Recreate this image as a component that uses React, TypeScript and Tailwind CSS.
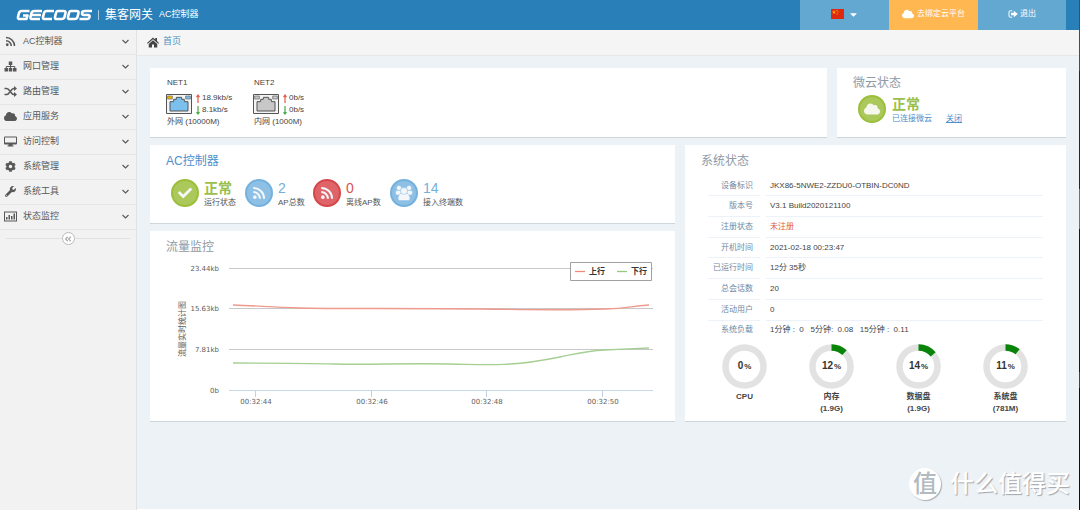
import { useState } from "react";
import { FaCloud, FaCog, FaWrench, FaCheck, FaCaretDown, FaAngleDoubleLeft } from "react-icons/fa";

const RssIcon = ({ className }: any) => (
  <svg viewBox="0 0 22 22" className={className} fill="none" stroke="currentColor" strokeWidth="3.2">
    <circle cx="4.500" cy="17.500" r="2.800" fill="currentColor" stroke="none" />
    <path d="M2 9.500A10.500 10.500 0 0 1 12.500 20M2 3A17 17 0 0 1 19 20" />
  </svg>
);

const SitemapIcon = ({ className }: any) => (
  <svg viewBox="0 0 26 22" className={className} fill="currentColor">
    <path d="M9.500 1h7v7h-7zM1 14h7v7H1zM9.500 14h7v7h-7zM18 14h7v7h-7z" />
    <path d="M13 7v8M4.500 15v-4h17v4" fill="none" stroke="currentColor" strokeWidth="2" />
  </svg>
);

const ShuffleIcon = ({ className }: any) => (
  <svg viewBox="0 0 26 22" className={className} fill="none" stroke="currentColor" strokeWidth="3">
    <path d="M1 5h4q3 0 5 3l5 6q2 3 5 3h1M1 17h4q3 0 5-3l5-6q2-3 5-3h1" />
    <path d="M20 0l6 5-6 5zM20 12l6 5-6 5z" fill="currentColor" stroke="none" />
  </svg>
);

const MonitorIcon = ({ className }: any) => (
  <svg viewBox="0 0 26 22" className={className} fill="currentColor">
    <path d="M2 1h22q2 0 2 2v12q0 2-2 2h-7v2h2v2H7v-2h2v-2H2q-2 0-2-2V3q0-2 2-2zM2 3v10h22V3z" fillRule="evenodd" />
  </svg>
);

const BarBoxIcon = ({ className }: any) => (
  <svg viewBox="0 0 26 22" className={className} fill="currentColor">
    <path d="M0 1h26v20H0zM2 3v16h22V3z" fillRule="evenodd" />
    <path d="M4 12h3v5H4zM9 8h3v9H9zM14 10h3v7h-3zM19 5h3v12h-3z" />
  </svg>
);

const HomeIcon = ({ className }: any) => (
  <svg viewBox="0 0 24 22" className={className} fill="currentColor">
    <path d="M12 1l4.500 4V2H20v6l4 3.800-1.500 1.700L12 4.300 1.500 13.500 0 11.800z" />
    <path d="M12 6.500l8.500 7.300V21H14v-6h-4v6H3.500v-7.200z" />
  </svg>
);

const SignOutIcon = ({ className }: any) => (
  <svg viewBox="0 0 24 20" className={className} fill="currentColor">
    <path d="M10 2H5Q2 2 2 5v10q0 3 3 3h5" fill="none" stroke="currentColor" strokeWidth="2.500" />
    <path d="M14 2l10 8-10 8v-5H7V7h7z" />
  </svg>
);

const ChevronIcon = ({ className }: any) => (
  <svg viewBox="0 0 14 10" className={className} fill="none" stroke="currentColor" strokeWidth="2.200">
    <path d="M1 2l6 6 6-6" />
  </svg>
);

const UsersIcon = ({ className }: any) => (
  <svg viewBox="0 0 36 32" className={className} fill="#f3f7fa" stroke="#8abde2" strokeWidth="1">
    <circle cx="8" cy="6" r="5" />
    <circle cx="28" cy="6" r="5" />
    <path d="M1 12q7-3 11 0v8H4q-3 0-3-4zM35 12q-7-3-11 0v8h8q3 0 3-4z" />
    <path d="M11 17h14q5 3 5 11 0 3-4 3H10q-4 0-4-3 0-8 5-11z" />
    <circle cx="18" cy="12" r="7" />
  </svg>
);

const MENU = [
  { label: "AC控制器", Icon: RssIcon },
  { label: "网口管理", Icon: SitemapIcon },
  { label: "路由管理", Icon: ShuffleIcon },
  { label: "应用服务", Icon: FaCloud },
  { label: "访问控制", Icon: MonitorIcon },
  { label: "系统管理", Icon: FaCog },
  { label: "系统工具", Icon: FaWrench },
  { label: "状态监控", Icon: BarBoxIcon },
];

const PORTS = [
  { name: "NET1", up: "18.9kb/s", down: "8.1kb/s", desc: "外网 (10000M)", fill: "#7cc0ee", left: "#f5b800", right: "#7cc0ee" },
  { name: "NET2", up: "0b/s", down: "0b/s", desc: "内网 (1000M)", fill: "#c8c8c8", left: "#c8c8c8", right: "#c8c8c8" },
];

const AC_STATS = [
  { value: "正常", label: "运行状态", Icon: FaCheck, icon: "size-[14px]", circle: "bg-[#abc85a] border-[#9bbf3b]", color: "text-[#9bbf4b] font-bold", width: "w-[74px]" },
  { value: "2", label: "AP总数", Icon: RssIcon, icon: "size-[14px]", circle: "bg-[#8dc0e4] border-[#74b1de]", color: "text-[#74afdb]", width: "w-[68px]" },
  { value: "0", label: "离线AP数", Icon: RssIcon, icon: "size-[14px]", circle: "bg-[#de6468] border-[#d6474b]", color: "text-[#d9534f]", width: "w-[77px]" },
  { value: "14", label: "接入终端数", Icon: UsersIcon, icon: "h-4 w-[18px]", circle: "bg-[#8dc0e4] border-[#74b1de]", color: "text-[#74afdb]", width: "w-[90px]" },
];

const SYSTEM = [
  { label: "设备标识", value: "JKX86-5NWE2-ZZDU0-OTBIN-DC0ND" },
  { label: "版本号", value: "V3.1 Build2020121100" },
  { label: "注册状态", value: "未注册", warn: true },
  { label: "开机时间", value: "2021-02-18 00:23:47" },
  { label: "已运行时间", value: "12分 35秒" },
  { label: "总会话数", value: "20" },
  { label: "活动用户", value: "0" },
  { label: "系统负载", value: "1分钟 :  0   5分钟:  0.08   15分钟 :  0.11" },
];

const GAUGES = [
  { percent: 0, label: "CPU", size: "" },
  { percent: 12, label: "内存", size: "(1.9G)" },
  { percent: 14, label: "数据盘", size: "(1.9G)" },
  { percent: 11, label: "系统盘", size: "(781M)" },
];

const Y_TICKS = [
  { y: 38, label: "23.44kb" },
  { y: 78, label: "15.63kb" },
  { y: 119, label: "7.81kb" },
  { y: 160, label: "0b" },
];

const X_TICKS = [
  { x: 105, label: "00:32:44" },
  { x: 221, label: "00:32:46" },
  { x: 336, label: "00:32:48" },
  { x: 452, label: "00:32:50" },
];

function Card({ className = "", children }: any) {
  return <section className={`border-b border-[#cfd6da] bg-white ${className}`}>{children}</section>;
}

function Header() {
  return (
    <header className="flex h-[30px] bg-[#2980b9] text-white">
      <div className="flex items-center pl-4">
        <svg viewBox="0 0 76 12" className="h-3 w-[76px]" fill="none" stroke="#fff" strokeWidth="2.600" strokeLinejoin="round">
          <path d="M13.500 2H6Q3.500 2 3 4L2 8Q1.500 10 4 10H10.500L11.500 6.500H7" />
          <path d="M26 2H18.500Q16 2 15.500 4L14.500 8Q14 10 16.500 10H24M15 6H25" />
          <path d="M38 2H31Q28.500 2 28 4L27 8Q26.500 10 29 10H36" />
          <path d="M42 2H47.500Q50 2 49.500 4L48.500 8Q48 10 45.500 10H41Q38.500 10 39 8L40 4Q40.500 2 42 2Z" />
          <path d="M55 2H60.500Q63 2 62.500 4L61.500 8Q61 10 58.500 10H54Q51.500 10 52 8L53 4Q53.500 2 55 2Z" />
          <path d="M76 2H69Q66 2 66 4T68 6H72Q74 6 73.500 8T71 10H63.500" />
        </svg>
        <span className="mx-[6px] h-[10px] w-px bg-white/60" />
        <span className="text-[12px]">集客网关</span>
        <span className="ml-[6px] text-[9px]">AC控制器</span>
      </div>
      <nav className="ml-auto mr-[13px] flex text-[8px]">
        <button className="flex w-[89px] items-center justify-center gap-1 bg-[#62a8d1] pb-[2px]" aria-label="语言">
          <svg viewBox="0 0 26 20" className="h-[10px] w-[13px]">
            <path d="M0 0h26v20H0z" fill="#de2910" />
            <path d="M6 2l1 3h3L7.600 7l1 3L6 8.200 3.400 10l1-3L2 5h3zM11 2h2v2h-2zM13 5h2v2h-2zM11 9h2v2h-2z" fill="#ffb400" />
          </svg>
          <FaCaretDown className="size-[11px]" />
        </button>
        <a href="#" className="flex w-[89px] items-center justify-center gap-[3px] bg-[#ffb752] pb-[2px]">
          <FaCloud className="size-[12px]" />
          去绑定云平台
        </a>
        <a href="#" className="flex w-[88px] items-center justify-center gap-[2px] bg-[#62a8d1] pb-[2px]">
          <SignOutIcon className="h-2 w-[10px]" />
          退出
        </a>
      </nav>
    </header>
  );
}

function Sidebar() {
  const [active, setActive] = useState("");

  return (
    <aside className="w-[137px] shrink-0 border-r border-[#dfe3e6] bg-[#f2f2f2] text-[#585858]">
      <ul>
        {MENU.map(({ label, Icon }) => (
          <li key={label} className="h-[25px] border-b border-[#e5e5e5]">
            <button
              className="flex h-full w-full items-center pb-px pl-1 pr-[7px]"
              aria-expanded={active === label}
              onClick={() => setActive(active === label ? "" : label)}
            >
              <Icon className="h-[11px] w-[13px]" />
              <span className="ml-[6px] text-[9px]">{label}</span>
              <ChevronIcon className="ml-auto h-[5px] w-[7px]" />
            </button>
          </li>
        ))}
      </ul>
      <div className="flex items-center px-[6px] pt-[2px]">
        <span className="h-px flex-1 bg-[#e0e0e0]" />
        <button className="flex size-[13px] items-center justify-center rounded-full border border-[#bbb] bg-white text-[#aaa]" aria-label="收起">
          <FaAngleDoubleLeft className="size-[8px]" />
        </button>
        <span className="h-px flex-1 bg-[#e0e0e0]" />
      </div>
    </aside>
  );
}

function Arrow({ down = false }) {
  return (
    <svg viewBox="0 0 8 18" className="h-[9px] w-1" fill="none" stroke={down ? "#4cae4c" : "#e8604c"} strokeWidth="2.500">
      <path d={down ? "M4 0v16M1 12l3 4 3-4" : "M4 18V2M1 6l3-4 3 4"} />
    </svg>
  );
}

function Port({ port }: any) {
  return (
    <div className="w-[87px] text-[8px] leading-[12px] text-[#444]">
      <div className="pl-px">{port.name}</div>
      <div className="mt-[3px] flex items-center gap-1">
        <svg viewBox="0 0 78 60" className="h-5 w-[26px]">
          <path d="M1.500 1.500h75v57h-75z" fill="#f4f4f4" stroke="#555" strokeWidth="3" />
          <path d="M12 51V23h11v-7h8v-6h16v6h8v7h11v28z" fill={port.fill} stroke="#555" strokeWidth="3" />
          <path d="M5 6h14v9H5z" fill={port.left} stroke="#666" strokeWidth="2" />
          <path d="M59 6h14v9H59z" fill={port.right} stroke="#666" strokeWidth="2" />
        </svg>
        <div>
          <div className="flex items-center gap-[2px]"><Arrow />{port.up}</div>
          <div className="flex items-center gap-[2px]"><Arrow down />{port.down}</div>
        </div>
      </div>
      <div className="pl-px">{port.desc}</div>
    </div>
  );
}

function TrafficChart() {
  return (
    <svg viewBox="0 0 525 190" className="block w-full" fill="#606060">
      {Y_TICKS.map((t) => (
        <g key={t.label}>
          <path d={`M79 ${t.y - 0.5}H503`} stroke={t.label === "0b" ? "#c8d8e8" : "#c8c8c8"} />
          <text x="69" y={t.y + 2} textAnchor="end" className="font-[DejaVu_Sans]" fontSize="7">{t.label}</text>
        </g>
      ))}
      {X_TICKS.map((t) => (
        <g key={t.label}>
          <path d={`M${t.x + 0.5} 160v6`} stroke="#c0d0e0" />
          <text x={t.x + 1} y="173" textAnchor="middle" className="font-[DejaVu_Sans]" fontSize="7">{t.label}</text>
        </g>
      ))}
      <text transform="translate(35 98) rotate(-90)" textAnchor="middle" fontSize="8">流量实时统计图</text>
      <path d="M83 74C110 75 120 76 150 77S270 77 330 78 430 79 455 78 480 75 499 74" fill="none" stroke="#ee9a8d" strokeWidth="1.300" />
      <path d="M83 132C130 132 150 132 185 133S250 132 300 133 340 134 360 133 395 129 410 126 435 120 455 119 480 118 499 117" fill="none" stroke="#a5cf93" strokeWidth="1.300" />
      <path d="M420.500 31.500h81v18h-81z" fill="#fff" stroke="#a0a0a0" />
      <path d="M425 40.500h10" stroke="#ee8a7d" strokeWidth="1.300" />
      <path d="M467 40.500h10" stroke="#95c980" strokeWidth="1.300" />
      <text x="439" y="43" fill="#333" fontSize="8" fontWeight="700">上行</text>
      <text x="481" y="43" fill="#333" fontSize="8" fontWeight="700">下行</text>
    </svg>
  );
}

function Gauge({ percent, label, size }: any) {
  return (
    <div className="flex w-[87px] flex-col items-center text-[8px] font-bold leading-[12px] text-[#444]">
      <div className="grid size-[45px] place-items-center">
        <svg viewBox="0 0 45 45" className="col-start-1 row-start-1 size-[45px] -rotate-90" fill="none" strokeWidth="6.500">
          <circle cx="22.500" cy="22.500" r="19" stroke="#e2e2e2" />
          {percent > 0 && (
            <circle cx="22.500" cy="22.500" r="19" stroke="#088408" pathLength="100" strokeDasharray={`${percent} 100`} />
          )}
        </svg>
        <span className="col-start-1 row-start-1 text-[10px] text-[#333]">
          {percent}
          <span className="ml-px text-[8px]">%</span>
        </span>
      </div>
      <div className="mt-[2px]">{label}</div>
      <div className="h-3">{size}</div>
    </div>
  );
}

export default function App() {
  return (
    <div className="relative flex min-h-screen bg-[#edf2f6] font-['Liberation_Sans','Noto_Sans_CJK_SC',sans-serif]">
      <div className="flex min-w-0 flex-1 flex-col">
        <Header />
        <div className="flex flex-1">
          <Sidebar />
          <main className="min-w-0 flex-1 border-b border-white">
            <div className="flex h-[26px] items-center gap-1 border-b border-[#e5e8ea] bg-[#f5f5f5] pb-px pl-[10px] text-[9px]">
              <HomeIcon className="h-[11px] w-[12px] text-[#444]" />
              <a href="#" className="text-[#4c8fbd]">首页</a>
            </div>

            <div className="flex flex-col gap-[7px] px-[13px] py-3">
              <div className="flex gap-[10px]">
                <Card className="flex h-[70px] flex-1 pl-4 pt-[9px]">
                  {PORTS.map((port) => <Port key={port.name} port={port} />)}
                </Card>
                <Card className="h-[70px] w-[229px] pl-4 pt-[7px]">
                  <h2 className="text-[12px] leading-4 text-[#8f9aa6]">微云状态</h2>
                  <div className="mt-px flex items-center gap-[6px] pl-[5px]">
                    <span className="flex size-7 items-center justify-center rounded-full border-2 border-[#9bbf3b] bg-[#abc85a]">
                      <FaCloud className="size-4 text-[#f6f8ee]" />
                    </span>
                    <div className="pt-1">
                      <div className="text-[14px] font-bold leading-4 text-[#9bbf4b]">正常</div>
                      <div className="flex gap-[14px] text-[8px] leading-[14px] text-[#4c8fcd]">
                        <span>已连接微云</span>
                        <a href="#" className="underline">关闭</a>
                      </div>
                    </div>
                  </div>
                </Card>
              </div>

              <div className="flex items-start gap-[10px]">
                <div className="flex min-w-0 flex-1 flex-col gap-[7px]">
                  <Card className="h-[79px] pl-4 pt-[8px]">
                    <h2 className="text-[12px] leading-4 text-[#4c8fcd]">AC控制器</h2>
                    <div className="mt-[7px] flex pl-[5px]">
                      {AC_STATS.map(({ value, label, Icon, icon, circle, color, width }) => (
                        <div key={label} className={`flex shrink-0 items-center gap-[5px] ${width}`}>
                          <span className={`flex size-7 shrink-0 items-center justify-center rounded-full border-2 ${circle}`}>
                            <Icon className={`${icon} text-[#f3f7fa]`} />
                          </span>
                          <div className="whitespace-nowrap pt-1">
                            <div className={`text-[14px] leading-4 ${color}`}>{value}</div>
                            <div className="text-[8px] leading-[14px] text-[#555]">{label}</div>
                          </div>
                        </div>
                      ))}
                    </div>
                  </Card>
                  <Card className="pt-[8px]">
                    <h2 className="pl-4 text-[12px] leading-4 text-[#8f9aa6]">流量监控</h2>
                    <div className="-mt-[24px]"><TrafficChart /></div>
                  </Card>
                </div>

                <Card className="w-[381px] pb-[6px] pt-[8px]">
                  <h2 className="pl-4 text-[12px] leading-4 text-[#8f9aa6]">系统状态</h2>
                  <table className="ml-[23px] mt-[7px] h-[164px] w-[335px] border-collapse text-[8px]">
                    <tbody>
                      {SYSTEM.map((row, i) => (
                        <tr key={row.label}>
                          <th className={`w-[52px] pr-[7px] text-right font-normal text-[#7089a3] ${i < 7 ? "border-b border-[#ecf2f8]" : ""}`}>{row.label}</th>
                          <td className="w-[6px]" />
                          <td className={`whitespace-pre pl-1 ${i < 7 ? "border-b border-[#ecf2f8]" : ""} ${row.warn ? "text-[#dd5a43]" : "text-[#444]"}`}>{row.value}</td>
                        </tr>
                      ))}
                    </tbody>
                  </table>
                  <div className="mt-1 flex pl-4">
                    {GAUGES.map((g) => <Gauge key={g.label} {...g} />)}
                  </div>
                </Card>
              </div>
            </div>
          </main>
        </div>
      </div>
      <div className="w-px bg-[linear-gradient(#a0148c_0_14%,#1c2a30_14%_37%,#1a9a80_37%_45%,#1c1424_45%_73%,#8c1480_73%_76%,#140c18_76%)]" />

      {/* Watermark */}
      <div className="absolute bottom-[10px] right-[10px] flex items-center gap-[9px]">
        <span className="flex size-8 items-center justify-center rounded-full bg-white text-[24px] font-medium leading-none text-[#b3bac0] shadow-[1px_1px_1px_#aab0b5]">值</span>
        <span className="text-[24px] font-medium leading-8 text-white [text-shadow:1px_1px_1px_#a0a6ac]">什么值得买</span>
      </div>
    </div>
  );
}
